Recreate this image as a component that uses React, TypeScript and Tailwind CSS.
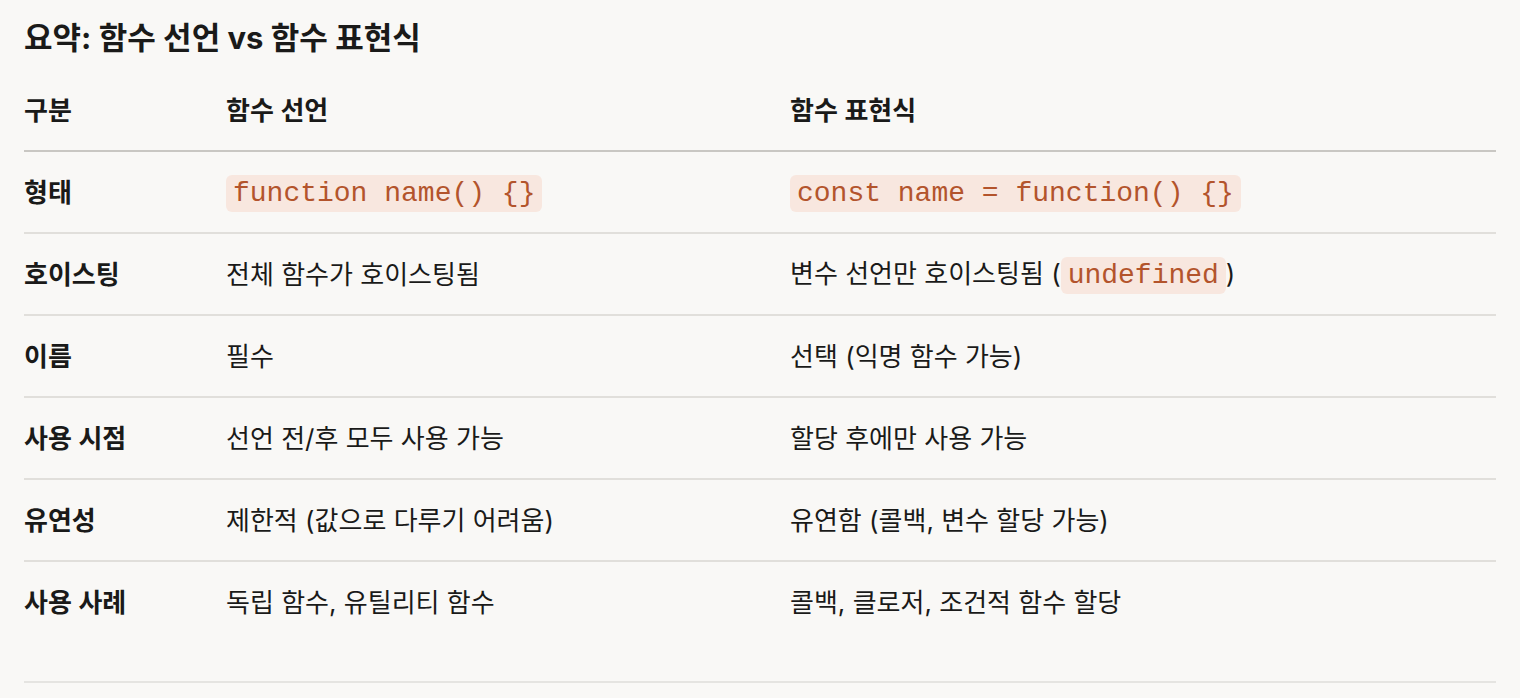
const rows: { label: string; decl: React.ReactNode; expr: React.ReactNode }[] = [
  {
    label: "형태",
    decl: <Code>function name() {"{}"}</Code>,
    expr: <Code>const name = function() {"{}"}</Code>,
  },
  {
    label: "호이스팅",
    decl: "전체 함수가 호이스팅됨",
    expr: (
      <>
        변수 선언만 호이스팅됨 (<Code>undefined</Code>)
      </>
    ),
  },
  { label: "이름", decl: "필수", expr: "선택 (익명 함수 가능)" },
  { label: "사용 시점", decl: "선언 전/후 모두 사용 가능", expr: "할당 후에만 사용 가능" },
  { label: "유연성", decl: "제한적 (값으로 다루기 어려움)", expr: "유연함 (콜백, 변수 할당 가능)" },
  { label: "사용 사례", decl: "독립 함수, 유틸리티 함수", expr: "콜백, 클로저, 조건적 함수 할당" },
];

function Code({ children }: { children: React.ReactNode }) {
  return (
    <code className="inline-block rounded-md bg-[#f8e7df] px-[7px] font-['Liberation_Mono',monospace] text-[28px] leading-[37px] text-[#b3542c]">
      {children}
    </code>
  );
}

export default function App() {
  return (
    <div className="min-h-screen bg-[#f9f8f6] px-6 font-['Inter','Noto_Sans_CJK_KR',sans-serif] text-[26px] text-[#1a1a19]">
      <h2 className="pt-5 text-[31px] font-bold leading-9">요약: 함수 선언 vs 함수 표현식</h2>
      <div className="mt-[14px]">
        <div className="grid h-[82px] grid-cols-[202px_564px_1fr] items-center border-b-2 border-[#c9c7c3] font-semibold">
          <div>구분</div>
          <div>함수 선언</div>
          <div>함수 표현식</div>
        </div>
        {rows.map((r, i) => (
          <div
            key={r.label}
            className={
              "grid grid-cols-[202px_564px_1fr] items-center " +
              (i < rows.length - 1 ? "h-[82px] border-b-2 border-[#e1dfdb]" : "h-20")
            }
          >
            <div className="font-semibold">{r.label}</div>
            <div>{r.decl}</div>
            <div>{r.expr}</div>
          </div>
        ))}
      </div>
      <div className="mt-[39px] h-[2px] bg-[#e5e4e1]" />
    </div>
  );
}
